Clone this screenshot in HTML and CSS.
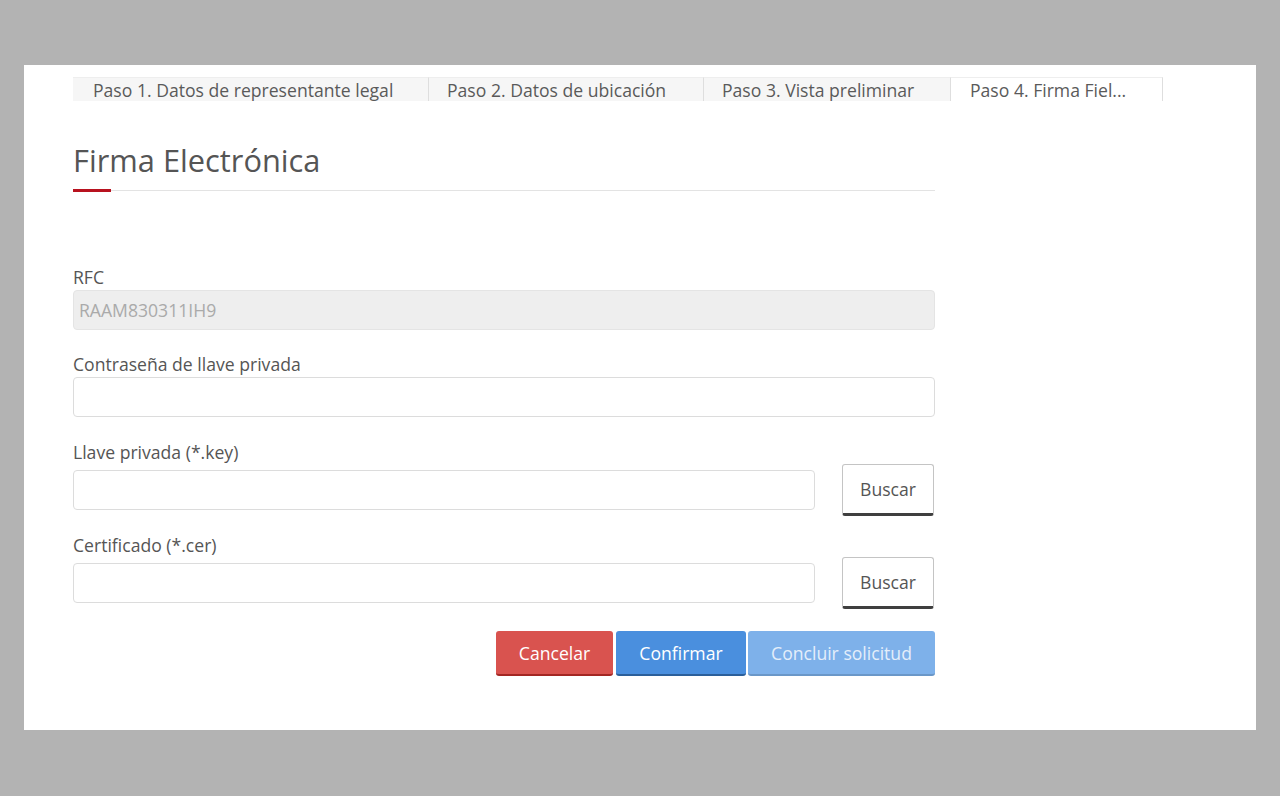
FILE: index.html
```html
<!DOCTYPE html>
<html lang="es">
<head>
<meta charset="utf-8">
<title>Firma Electrónica</title>
<link rel="stylesheet" href="styles.css">
</head>
<body>
<div class="panel">
  <div class="tabs">
    <div class="tab t1">Paso 1. Datos de representante legal</div>
    <div class="tab t2">Paso 2. Datos de ubicación</div>
    <div class="tab t3">Paso 3. Vista preliminar</div>
    <div class="tab t4 active">Paso 4. Firma Fiel...</div>
  </div>
  <div class="form">
    <h1 class="title">Firma Electrónica</h1>
    <div class="rule"></div>
    <div class="field first">
      <label class="label">RFC</label>
      <input class="input disabled" type="text" value="RAAM830311IH9" disabled>
    </div>
    <div class="field">
      <label class="label">Contraseña de llave privada</label>
      <input class="input" type="password">
    </div>
    <div class="field key">
      <label class="label">Llave privada (*.key)</label>
      <div class="row">
        <input class="input grow" type="text">
        <button class="btn-search">Buscar</button>
      </div>
    </div>
    <div class="field short">
      <label class="label">Certificado (*.cer)</label>
      <div class="row">
        <input class="input grow" type="text">
        <button class="btn-search">Buscar</button>
      </div>
    </div>
    <div class="actions">
      <button class="btn cancel">Cancelar</button>
      <button class="btn confirm">Confirmar</button>
      <button class="btn conclude">Concluir solicitud</button>
    </div>
  </div>
</div>
</body>
</html>
```
FILE: styles.css
```css
* { box-sizing: border-box; }
html, body { margin: 0; padding: 0; }
body {
  background: #b3b3b3;
  font-family: "Open Sans", "Noto Sans", sans-serif;
  color: #555;
  height: 796px;
  overflow: hidden;
  padding-top: 65px;
}
.panel {
  margin-left: 24px;
  width: 1232px;
  height: 665px;
  background: #fff;
  padding: 12px 0 0 49px;
}
.tabs {
  display: flex;
  height: 24px;
}
.tab {
  height: 24px;
  font-size: 17.6px;
  line-height: 24px;
  color: #5a5a5a;
  background: #f6f6f6;
  border-top: 1px solid #eee;
  border-right: 1px solid #dedede;
  padding-left: 20px;
  white-space: nowrap;
  overflow: hidden;
}
.t1 { width: 356px; }
.t2 { width: 275px; padding-left: 18px; }
.t3 { width: 247px; padding-left: 18px; }
.t4 { width: 212px; padding-left: 19px; }
.tab.active { background: #fff; }
.form { width: 862px; }
.title {
  margin: 41px 0 0;
  font-size: 30.8px;
  line-height: 36px;
  font-weight: 400;
  color: #555;
}
.rule {
  margin-top: 11px;
  height: 3px;
  background:
    linear-gradient(#b8121f, #b8121f) no-repeat 0 0 / 38px 3px,
    linear-gradient(#e3e3e3, #e3e3e3) no-repeat 0 1px / 100% 1px;
}
.field { margin-top: 23px; }
.field.first { margin-top: 74px; }
.field.key { margin-top: 24px; }
.field.short { margin-top: 18px; }
.label {
  display: block;
  font-size: 17.6px;
  line-height: 22px;
  color: #555;
  margin-bottom: 2px;
}
.field .row { margin-top: -1px; }
.input {
  display: block;
  width: 100%;
  height: 40px;
  border: 1px solid #dcdcdc;
  border-radius: 4px;
  background: #fff;
  font-family: inherit;
  font-size: 17.6px;
  color: #555;
  padding: 0 5px;
  outline: none;
}
.input.disabled {
  background: #eee;
  color: #aaa;
  border-color: #e4e4e4;
  -webkit-text-fill-color: #aaa;
  opacity: 1;
}
.row {
  display: flex;
  align-items: center;
  gap: 27px;
}
.input.grow { width: 742px; flex: none; }
.btn-search {
  width: 92px;
  height: 52px;
  flex: none;
  background: #fff;
  border: 1px solid #c4c4c4;
  border-bottom: 3px solid #3f3f3f;
  border-radius: 3px;
  font-family: inherit;
  font-size: 17.6px;
  color: #555;
  padding: 0;
  cursor: pointer;
}
.actions {
  margin-top: 22px;
  display: flex;
  justify-content: flex-end;
  margin-right: 0;
}
.btn {
  height: 45px;
  border: none;
  border-radius: 3px;
  font-family: inherit;
  font-size: 17.6px;
  color: #fff;
  padding: 0;
  cursor: pointer;
}
.cancel {
  width: 117px;
  background: #d9534f;
  border-bottom: 2px solid #a32723;
  margin-right: 3px;
}
.confirm {
  width: 130px;
  background: #4a8fde;
  border-bottom: 2px solid #2b5f9a;
  margin-right: 2px;
}
.conclude {
  width: 187px;
  background: #7eb1ea;
  color: #e4eefa;
  border-bottom: 2px solid #6a97c8;
}
```
